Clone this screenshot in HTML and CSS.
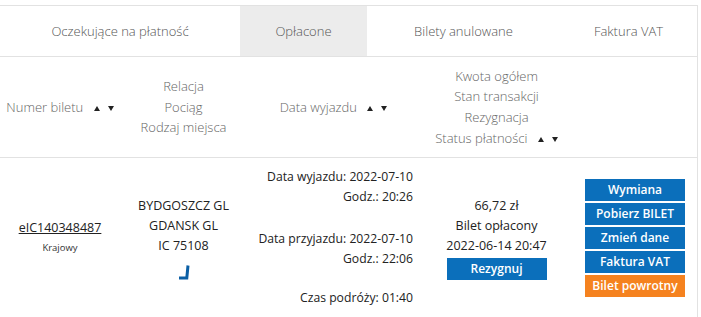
FILE: index.html
```html
<!DOCTYPE HTML>
<html>
<head>
<meta charset="utf-8">
<link rel="stylesheet" href="styles.css">
</head>
<body>
	<div class="panel">
		<ul class="tabs">
			<li class="tab-wait">Oczekujące na płatność</li>
			<li class="tab-paid active">Opłacone</li>
			<li class="tab-cancel">Bilety anulowane</li>
			<li class="tab-vat">Faktura VAT</li>
		</ul>

		<table class="tickets">
			<colgroup>
				<col class="c-num">
				<col class="c-route">
				<col class="c-date">
				<col class="c-amount">
				<col class="c-actions">
			</colgroup>
			<thead>
				<tr>
					<th>Numer biletu <span class="sort"><i class="up"></i><i class="down"></i></span></th>
					<th>Relacja<br>Pociąg<br>Rodzaj miejsca</th>
					<th>Data wyjazdu <span class="sort"><i class="up"></i><i class="down"></i></span></th>
					<th class="amount-head">Kwota ogółem<br>Stan transakcji<br>Rezygnacja<br>Status płatności <span class="sort"><i class="up"></i><i class="down"></i></span></th>
					<th></th>
				</tr>
			</thead>
			<tbody>
				<tr>
					<td class="num">
						<a class="ticket-no">eIC140348487</a>
						<div class="kind">Krajowy</div>
					</td>
					<td class="route">
						BYDGOSZCZ GL<br>GDANSK GL<br>IC 75108
						<div class="seat-icon">
							<svg width="14" height="16" viewBox="0 0 14 16"><path d="M11 1.5 L9.8 14 L2 14" fill="none" stroke="#0b5fa5" stroke-width="3"/></svg>
						</div>
					</td>
					<td class="dates">
						<div class="block">Data wyjazdu: 2022-07-10<br>Godz.: 20:26</div>
						<div class="block arrive">Data przyjazdu: 2022-07-10<br>Godz.: 22:06</div>
						<div class="block travel">Czas podróży: 01:40</div>
					</td>
					<td class="amount">
						66,72 zł<br>Bilet opłacony<br>2022-06-14 20:47
						<a class="btn btn-wide">Rezygnuj</a>
					</td>
					<td class="actions">
						<a class="btn">Wymiana</a>
						<a class="btn">Pobierz BILET</a>
						<a class="btn">Zmień dane</a>
						<a class="btn">Faktura VAT</a>
						<a class="btn btn-orange">Bilet powrotny</a>
					</td>
				</tr>
			</tbody>
		</table>
	</div>
</body>
</html>
```

FILE: styles.css
```css
body {
	margin: 0;
	padding-top: 5px;
	background: #fff;
	font-family: "Open Sans", "Liberation Sans", sans-serif;
	color: #222;
}

.panel {
	width: 697px;
	border-top: 1px solid #e2e2e2;
	border-right: 1px solid #e2e2e2;
}

.tabs {
	display: flex;
	margin: 0;
	padding: 0;
	list-style: none;
	border-bottom: 1px solid #e2e2e2;
}

.tabs li {
	height: 50px;
	line-height: 50px;
	text-align: center;
	font-size: 13px;
	font-weight: 300;
	color: #555;
}

.tabs .tab-wait { width: 240px; }
.tabs .tab-paid { width: 127px; }
.tabs .tab-cancel { width: 193px; }
.tabs .tab-vat { flex: 1; }

.tabs li.active {
	background: #ececec;
}

.tickets {
	width: 100%;
	border-collapse: collapse;
	table-layout: fixed;
}

.c-num { width: 120px; }
.c-route { width: 127px; }
.c-date { width: 173px; }
.c-amount { width: 153px; }

.tickets th {
	height: 100px;
	padding: 0;
	font-size: 13px;
	font-weight: 300;
	line-height: 20.5px;
	color: #666;
	text-align: center;
	vertical-align: middle;
	border-bottom: 1px solid #e2e2e2;
}

.sort {
	display: inline-block;
	margin-left: 7px;
	vertical-align: 1px;
}

.sort i {
	display: inline-block;
	width: 0;
	height: 0;
	border-left: 3.5px solid transparent;
	border-right: 3.5px solid transparent;
	margin-right: 8px;
}

.sort i:last-child {
	margin-right: 0;
}

.sort .up {
	border-bottom: 5px solid #222;
}

.sort .down {
	border-top: 5px solid #222;
}

.tickets td {
	padding: 9px 0 10px;
	font-size: 12.5px;
	line-height: 20px;
	text-align: center;
	vertical-align: middle;
}

.ticket-no {
	text-decoration: underline;
	color: #222;
}

.kind {
	font-size: 9.5px;
	color: #333;
}

.seat-icon {
	height: 16px;
	margin-top: 8px;
	line-height: 0;
}

.tickets td.dates {
	text-align: right;
	padding-right: 7px;
	font-size: 12.2px;
}

.dates .arrive {
	margin-top: 22px;
}

.dates .travel {
	margin-top: 19px;
}

.amount {
	line-height: 19.5px;
}

.btn {
	display: block;
	width: 100px;
	height: 22px;
	margin: 0 auto 2px;
	line-height: 22px;
	font-size: 12px;
	font-weight: 600;
	color: #fff;
	background: #0b6fbb;
	text-align: center;
}

.btn-wide {
	margin-top: 2px;
	margin-bottom: 0;
}

.btn-orange {
	background: #f5821f;
	margin-bottom: 0;
}
```
